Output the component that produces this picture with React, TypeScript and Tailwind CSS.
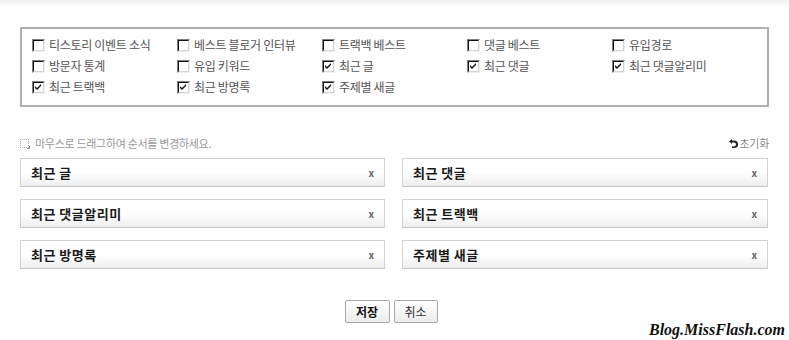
import React, { useState } from 'react';

const FONT = '"Noto Sans CJK KR", "Noto Sans", sans-serif';

const OPTIONS: { label: string; checked: boolean }[] = [
  { label: '티스토리 이벤트 소식', checked: false },
  { label: '베스트 블로거 인터뷰', checked: false },
  { label: '트랙백 베스트', checked: false },
  { label: '댓글 베스트', checked: false },
  { label: '유입경로', checked: false },
  { label: '방문자 통계', checked: false },
  { label: '유입 키워드', checked: false },
  { label: '최근 글', checked: true },
  { label: '최근 댓글', checked: true },
  { label: '최근 댓글알리미', checked: true },
  { label: '최근 트랙백', checked: true },
  { label: '최근 방명록', checked: true },
  { label: '주제별 새글', checked: true },
];

const ORDER = ['최근 글', '최근 댓글', '최근 댓글알리미', '최근 트랙백', '최근 방명록', '주제별 새글'];

const Check: React.FC<{ on: boolean }> = ({ on }) => (
  <span className="relative w-[13px] h-[13px] shrink-0 border border-t-[#808080] border-l-[#808080] border-b-[#f0f0f0] border-r-[#f0f0f0] bg-white">
    <span className="absolute inset-0 border border-t-[#111] border-l-[#111] border-b-[#d4d4d4] border-r-[#d4d4d4]" />
    {on && (
      <svg className="absolute left-[2px] top-[2px]" width="7" height="7" viewBox="0 0 7 7">
        <path d="M0 2 L2 4 L6 0 L6 2 L2 6 L0 4 Z" fill="#111" />
      </svg>
    )}
  </span>
);

const App: React.FC = () => {
  const [opts, setOpts] = useState(OPTIONS);
  const [order, setOrder] = useState(ORDER);

  const toggle = (i: number) => setOpts(opts.map((o, j) => (j === i ? { ...o, checked: !o.checked } : o)));

  return (
    <div className="relative w-[789px] h-[340px] bg-white overflow-hidden" style={{ fontFamily: FONT }}>
      <div className="h-[7px] bg-gradient-to-b from-[#f0f0f0] to-white" />

      <div className="px-5 pt-[20px]">
        {/* widget options */}
        <div className="border-2 border-[#b0b0b0] pl-[10px] pt-[6px] pb-[8px]">
          <div className="grid grid-cols-[repeat(5,145px)] gap-y-px">
            {opts.map((o, i) => (
              <label key={o.label} onClick={() => toggle(i)} className="h-5 flex items-center gap-[4px] cursor-pointer">
                <Check on={o.checked} />
                <span className="text-[12px] leading-none text-[#555] tracking-[-0.3px]">{o.label}</span>
              </label>
            ))}
          </div>
        </div>

        {/* hint + reset */}
        <div className="mt-[29px] h-[14px] flex items-center justify-between text-[11px] leading-none">
          <div className="flex items-center gap-[6px] text-[#999]">
            <span className="relative w-[9px] h-[9px] border border-dotted border-[#aaa]">
              <span className="absolute -right-[2px] -bottom-[2px] w-[3px] h-[3px] border-r border-b border-[#888]" />
            </span>
            <span className="tracking-[-0.3px]">마우스로 드래그하여 순서를 변경하세요.</span>
          </div>
          <button onClick={() => setOrder(ORDER)} className="flex items-center gap-[2px] text-[#888]">
            <svg width="9" height="10" viewBox="0 0 9 10">
              <path d="M3 1 L0 3.5 L3 6 L3 4.5 L5 4.5 Q7 4.5 7 6.5 Q7 8.5 4.5 8.5 L3 8.5 L3 10 L5 10 Q9 10 9 6.5 Q9 2.5 5 2.5 L3 2.5 Z" fill="#222" />
            </svg>
            <span className="tracking-[-0.3px]">초기화</span>
          </button>
        </div>

        {/* sortable list */}
        <div className="mt-[8px] grid grid-cols-[365px_366px] gap-x-[17px] gap-y-[12px]">
          {order.map(name => (
            <div
              key={name}
              className="h-[29px] flex items-center justify-between pl-[10px] pr-[10px] border border-[#d2d2d2] border-b-[#c4c4c4] bg-gradient-to-b from-white from-50% to-[#eeeeee]"
            >
              <span className="text-[13px] font-bold text-[#1a1a1a] tracking-[0.5px]">{name}</span>
              <button onClick={() => setOrder(order.filter(n => n !== name))} className="text-[10px] font-bold text-[#666] leading-none">x</button>
            </div>
          ))}
        </div>

        {/* buttons */}
        <div className="mt-[31px] flex justify-center gap-[4px] pr-[7px]">
          <button className="w-[45px] h-[23px] border border-[#a8a8a8] rounded-[2px] bg-gradient-to-b from-white to-[#ececec] text-[12px] font-bold text-[#111]">저장</button>
          <button className="w-[44px] h-[23px] border border-[#a8a8a8] rounded-[2px] bg-gradient-to-b from-white to-[#ececec] text-[12px] text-[#333]">취소</button>
        </div>
      </div>

      {/* watermark */}
      <div
        className="absolute right-[4px] top-[322px] text-[16px] font-bold italic text-[#111] leading-none"
        style={{ fontFamily: '"Liberation Serif", serif' }}
      >
        Blog.MissFlash.com
      </div>
    </div>
  );
};

export default App;
